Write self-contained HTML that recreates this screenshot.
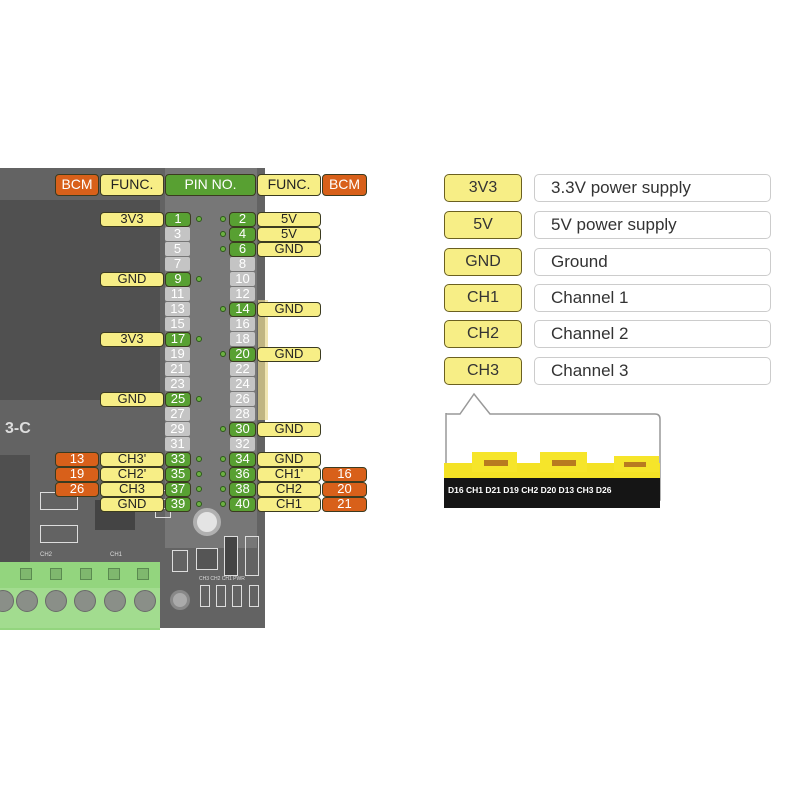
<!DOCTYPE html><html><head><style>
body{margin:0;width:800px;height:800px;background:#fff;position:relative;overflow:hidden;font-family:"Liberation Sans",sans-serif}
.a{position:absolute;box-sizing:border-box}
.b{position:absolute;box-sizing:border-box;height:15px;border:1.3px solid #3b3b20;border-radius:4px;font-size:13px;line-height:12px;text-align:center;color:#222}
.y{background:#f7ee86}
.g{background:#58a032;color:#fff}
.o{background:#d8601a;color:#fff}
.n{position:absolute;height:14px;width:25px;background:#c4c4c4;color:#fff;font-size:13px;line-height:14px;text-align:center;border-radius:2px}
.h{height:22px;line-height:19px;font-size:14px;top:174px}
.lg{position:absolute;left:444px;width:78px;height:28px;border:1.5px solid #6b6020;border-radius:5px;background:#f7ee86;font-size:16px;line-height:25px;text-align:center;color:#333;box-sizing:border-box}
.lw{position:absolute;left:534px;width:237px;height:28px;border:1.5px solid #ccc;border-radius:5px;background:#fff;font-size:17px;line-height:25px;padding-left:16px;color:#333;box-sizing:border-box}
.d{position:absolute;width:6px;height:6px;border-radius:50%;border:1.5px solid #2c5a18;background:#6cb043;box-sizing:border-box}
.s{position:absolute;top:590px;width:22px;height:22px;border-radius:50%;background:#8a8f88;border:1px solid #6a6a6a;box-sizing:border-box}
.q{position:absolute;top:568px;width:12px;height:12px;border:1px solid #5a8a50;background:#7fb86e;box-sizing:border-box}
.p{position:absolute;border:1.5px solid #ddd;box-sizing:border-box}
</style></head><body>
<!-- board -->
<div class="a" style="left:0;top:168px;width:265px;height:460px;background:#636363"></div>
<div class="a" style="left:0;top:200px;width:160px;height:200px;background:#505050"></div>
<div class="a" style="left:165px;top:168px;width:92px;height:380px;background:#777"></div>
<div class="a" style="left:0;top:455px;width:30px;height:110px;background:#4f4f4f"></div>
<div class="a" style="left:0;top:562px;width:160px;height:68px;background:#93d57e"></div>
<div class="a" style="left:0;top:588px;width:160px;height:40px;background:#a2dc8f"></div>
<div class="q" style="left:20px"></div><div class="q" style="left:50px"></div><div class="q" style="left:80px"></div><div class="q" style="left:108px"></div><div class="q" style="left:137px"></div>
<div class="s" style="left:-8px"></div><div class="s" style="left:16px"></div><div class="s" style="left:45px"></div><div class="s" style="left:74px"></div><div class="s" style="left:104px"></div><div class="s" style="left:134px"></div>
<div class="a" style="left:40px;top:552px;color:#ddd;font-size:6px">CH2</div>
<div class="a" style="left:110px;top:552px;color:#ddd;font-size:6px">CH1</div>
<div class="a" style="left:193px;top:508px;width:28px;height:28px;border-radius:50%;background:#e4e4e4;border:4px solid #b0b0b0"></div>
<div class="a" style="left:170px;top:590px;width:20px;height:20px;border-radius:50%;background:#aaa;border:3px solid #888"></div>
<div class="p" style="left:196px;top:548px;width:22px;height:22px;background:#555"></div>
<div class="p" style="left:224px;top:536px;width:14px;height:40px;background:#444"></div>
<div class="p" style="left:245px;top:536px;width:14px;height:40px"></div>
<div class="p" style="left:200px;top:585px;width:10px;height:22px"></div>
<div class="p" style="left:216px;top:585px;width:10px;height:22px"></div>
<div class="p" style="left:232px;top:585px;width:10px;height:22px"></div>
<div class="p" style="left:249px;top:585px;width:10px;height:22px"></div>
<div class="a" style="left:199px;top:576px;color:#ddd;font-size:5px;white-space:nowrap">CH3 CH2 CH1 PWR</div>
<div class="p" style="left:40px;top:492px;width:38px;height:18px"></div>
<div class="p" style="left:40px;top:525px;width:38px;height:18px"></div>
<div class="p" style="left:155px;top:490px;width:16px;height:10px"></div>
<div class="p" style="left:155px;top:508px;width:16px;height:10px"></div>
<div class="p" style="left:172px;top:550px;width:16px;height:22px"></div>
<div class="a" style="left:95px;top:500px;width:40px;height:30px;background:#444"></div>
<div class="a" style="left:258px;top:300px;width:10px;height:120px;background:#e8d890;opacity:.7"></div>
<div class="a" style="left:5px;top:420px;color:#ddd;font-size:16px;font-weight:bold">3-C</div>
<!-- header -->
<div class="b o h" style="left:55px;width:44px">BCM</div>
<div class="b y h" style="left:100px;width:64px">FUNC.</div>
<div class="b g h" style="left:165px;width:91px">PIN NO.</div>
<div class="b y h" style="left:257px;width:64px">FUNC.</div>
<div class="b o h" style="left:322px;width:45px">BCM</div>
<!-- gray pins -->
<div class="n" style="left:165px;top:227px">3</div><div class="n" style="left:165px;top:242px">5</div><div class="n" style="left:165px;top:257px">7</div><div class="n" style="left:230px;top:257px">8</div><div class="n" style="left:230px;top:272px">10</div><div class="n" style="left:165px;top:287px">11</div><div class="n" style="left:230px;top:287px">12</div><div class="n" style="left:165px;top:302px">13</div><div class="n" style="left:165px;top:317px">15</div><div class="n" style="left:230px;top:317px">16</div><div class="n" style="left:230px;top:332px">18</div><div class="n" style="left:165px;top:347px">19</div><div class="n" style="left:165px;top:362px">21</div><div class="n" style="left:230px;top:362px">22</div><div class="n" style="left:165px;top:377px">23</div><div class="n" style="left:230px;top:377px">24</div><div class="n" style="left:230px;top:392px">26</div><div class="n" style="left:165px;top:407px">27</div><div class="n" style="left:230px;top:407px">28</div><div class="n" style="left:165px;top:422px">29</div><div class="n" style="left:165px;top:437px">31</div><div class="n" style="left:230px;top:437px">32</div>
<!-- left active -->
<div class="b y" style="left:100px;top:212px;width:64px">3V3</div><div class="b g" style="left:165px;top:212px;width:26px">1</div><div class="d" style="left:196px;top:216px"></div>
<div class="b y" style="left:100px;top:272px;width:64px">GND</div><div class="b g" style="left:165px;top:272px;width:26px">9</div><div class="d" style="left:196px;top:276px"></div>
<div class="b y" style="left:100px;top:332px;width:64px">3V3</div><div class="b g" style="left:165px;top:332px;width:26px">17</div><div class="d" style="left:196px;top:336px"></div>
<div class="b y" style="left:100px;top:392px;width:64px">GND</div><div class="b g" style="left:165px;top:392px;width:26px">25</div><div class="d" style="left:196px;top:396px"></div>
<div class="b o" style="left:55px;top:452px;width:44px">13</div><div class="b y" style="left:100px;top:452px;width:64px">CH3'</div><div class="b g" style="left:165px;top:452px;width:26px">33</div><div class="d" style="left:196px;top:456px"></div>
<div class="b o" style="left:55px;top:467px;width:44px">19</div><div class="b y" style="left:100px;top:467px;width:64px">CH2'</div><div class="b g" style="left:165px;top:467px;width:26px">35</div><div class="d" style="left:196px;top:471px"></div>
<div class="b o" style="left:55px;top:482px;width:44px">26</div><div class="b y" style="left:100px;top:482px;width:64px">CH3</div><div class="b g" style="left:165px;top:482px;width:26px">37</div><div class="d" style="left:196px;top:486px"></div>
<div class="b y" style="left:100px;top:497px;width:64px">GND</div><div class="b g" style="left:165px;top:497px;width:26px">39</div><div class="d" style="left:196px;top:501px"></div>
<!-- right active -->
<div class="d" style="left:220px;top:216px"></div><div class="b g" style="left:229px;top:212px;width:27px">2</div><div class="b y" style="left:257px;top:212px;width:64px">5V</div>
<div class="d" style="left:220px;top:231px"></div><div class="b g" style="left:229px;top:227px;width:27px">4</div><div class="b y" style="left:257px;top:227px;width:64px">5V</div>
<div class="d" style="left:220px;top:246px"></div><div class="b g" style="left:229px;top:242px;width:27px">6</div><div class="b y" style="left:257px;top:242px;width:64px">GND</div>
<div class="d" style="left:220px;top:306px"></div><div class="b g" style="left:229px;top:302px;width:27px">14</div><div class="b y" style="left:257px;top:302px;width:64px">GND</div>
<div class="d" style="left:220px;top:351px"></div><div class="b g" style="left:229px;top:347px;width:27px">20</div><div class="b y" style="left:257px;top:347px;width:64px">GND</div>
<div class="d" style="left:220px;top:426px"></div><div class="b g" style="left:229px;top:422px;width:27px">30</div><div class="b y" style="left:257px;top:422px;width:64px">GND</div>
<div class="d" style="left:220px;top:456px"></div><div class="b g" style="left:229px;top:452px;width:27px">34</div><div class="b y" style="left:257px;top:452px;width:64px">GND</div>
<div class="d" style="left:220px;top:471px"></div><div class="b g" style="left:229px;top:467px;width:27px">36</div><div class="b y" style="left:257px;top:467px;width:64px">CH1'</div><div class="b o" style="left:322px;top:467px;width:45px">16</div>
<div class="d" style="left:220px;top:486px"></div><div class="b g" style="left:229px;top:482px;width:27px">38</div><div class="b y" style="left:257px;top:482px;width:64px">CH2</div><div class="b o" style="left:322px;top:482px;width:45px">20</div>
<div class="d" style="left:220px;top:501px"></div><div class="b g" style="left:229px;top:497px;width:27px">40</div><div class="b y" style="left:257px;top:497px;width:64px">CH1</div><div class="b o" style="left:322px;top:497px;width:45px">21</div>
<!-- legend -->
<div class="lg" style="top:174px">3V3</div><div class="lw" style="top:174px">3.3V power supply</div>
<div class="lg" style="top:211px">5V</div><div class="lw" style="top:211px">5V power supply</div>
<div class="lg" style="top:248px">GND</div><div class="lw" style="top:248px">Ground</div>
<div class="lg" style="top:284px">CH1</div><div class="lw" style="top:284px">Channel 1</div>
<div class="lg" style="top:320px">CH2</div><div class="lw" style="top:320px">Channel 2</div>
<div class="lg" style="top:357px">CH3</div><div class="lw" style="top:357px">Channel 3</div>
<!-- callout -->
<svg class="a" style="left:440px;top:388px" width="230" height="125">
<path d="M6 25 Q6 26 8 26 L20 26 L34 6 L50 26 L215 26 Q220 26 220 31 L220 112 L6 112 Z" fill="#fff" stroke="#999" stroke-width="1.5"/>
<rect x="4" y="75" width="216" height="15" fill="#f4e225"/>
<rect x="32" y="64" width="45" height="20" fill="#f6e52a"/><rect x="100" y="64" width="47" height="20" fill="#f6e52a"/><rect x="174" y="68" width="45" height="16" fill="#f6e52a"/>
<rect x="44" y="72" width="24" height="6" fill="#b87a20"/><rect x="112" y="72" width="24" height="6" fill="#b87a20"/><rect x="184" y="74" width="22" height="5" fill="#b87a20"/>
<rect x="4" y="90" width="216" height="30" fill="#151515"/>
<text x="8" y="105" fill="#fff" font-size="8.5" font-weight="bold" font-family="Liberation Sans">D16 CH1 D21 D19 CH2 D20 D13 CH3 D26</text>
</svg>
</body></html>
